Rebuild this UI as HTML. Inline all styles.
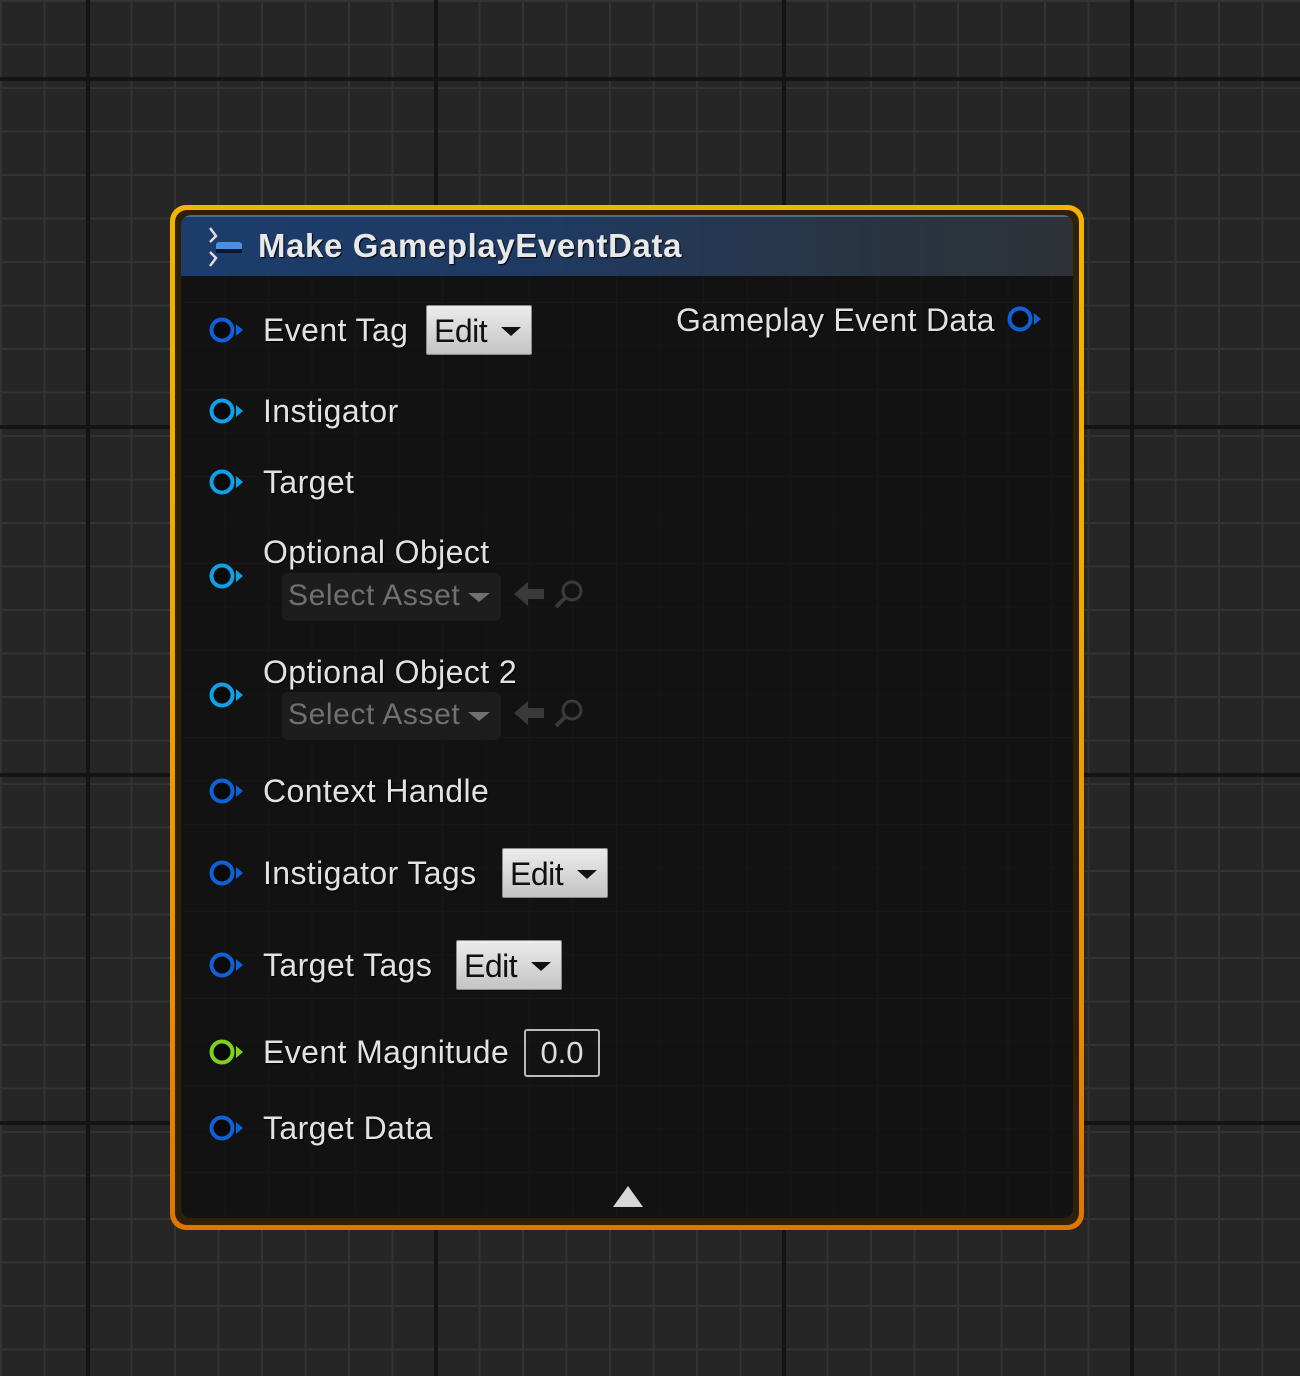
<!DOCTYPE html>
<html><head><meta charset="utf-8"><style>
html,body{margin:0;padding:0}
body{width:1300px;height:1376px;overflow:hidden;position:relative;background-color:#262626;
background-image:
repeating-linear-gradient(to right, transparent 0, transparent 86px, #141414 86px, #141414 90px, transparent 90px, transparent 348px),
repeating-linear-gradient(to bottom, transparent 0, transparent 77px, #141414 77px, #141414 81px, transparent 81px, transparent 348px),
repeating-linear-gradient(to right, #333 0, #333 2px, transparent 2px, transparent 43.5px),
repeating-linear-gradient(to bottom, #333 0, #333 2px, transparent 2px, transparent 43.5px);
font-family:"Liberation Sans",sans-serif;}
.node{position:absolute;left:170px;top:205px;width:914px;height:1025px;border-radius:16px;
background:linear-gradient(#f3b400,#f0a800 40%,#e88a00 80%,#e07400);}
.inner{position:absolute;left:5px;top:5px;right:5px;bottom:5px;border-radius:12px;background:#2e2108;}
.body{position:absolute;left:11px;top:10px;right:11px;bottom:12px;border-radius:10px;background-color:#111211;
background-image:repeating-linear-gradient(to right,#161716 0,#161716 1px,transparent 1px,transparent 43.5px),repeating-linear-gradient(to bottom,#161716 0,#161716 1px,transparent 1px,transparent 43.5px);
overflow:hidden}
.hdr{position:absolute;left:0;top:0;right:0;height:59px;background:linear-gradient(to right,#1c3c6c,#1f3a62 40%,#2a3440 80%,#2f3338);border-top:2px solid #4a6a90}
.t{position:absolute;color:#e2e2e2;font-size:32px;line-height:36px;white-space:nowrap;letter-spacing:0.4px;text-shadow:1px 1px 1px #000}
.edit{position:absolute;height:50px;background:linear-gradient(#ececec,#c4c4c4);border:1px solid #8a8a8a;border-radius:2px;color:#111;font-size:32px;line-height:50px;padding-left:7px;box-sizing:border-box;letter-spacing:-0.5px}
.edit:after{content:"";position:absolute;right:10px;top:21px;border-left:10px solid transparent;border-right:10px solid transparent;border-top:9px solid #111}
.sa{position:absolute;width:219px;height:48px;background:#1c1d1c;border-radius:6px;color:#707070;font-size:30px;line-height:46px;padding-left:6px;box-sizing:border-box;letter-spacing:0.6px;white-space:nowrap}
.sa:after{content:"";position:absolute;left:186px;top:20px;border-left:11px solid transparent;border-right:11px solid transparent;border-top:9px solid #707070}
</style></head><body>
<div class="node"><div class="inner"></div><div class="body"><div class="hdr"></div></div></div>

<svg style="position:absolute;left:200px;top:224px" width="48" height="46" viewBox="0 0 48 46">
<path d="M10 4 L16 12 L10 18" stroke="#ddd" stroke-width="2.5" fill="none"/>
<path d="M10 42 L16 34 L10 28" stroke="#ddd" stroke-width="2.5" fill="none"/>
<rect x="16" y="18" width="26" height="10" rx="3" fill="#4a90e0"/>
<rect x="16" y="25" width="26" height="4" fill="#0c1830"/>
</svg>
<div class="t" style="left:258px;top:228px;font-weight:bold;font-size:33px;letter-spacing:0.6px;color:#e8e8e8">Make GameplayEventData</div>

<div class="t" style="left:676px;top:302px;letter-spacing:0.3px">Gameplay Event Data</div>

<div class="t" style="left:263px;top:312px">Event Tag</div>
<div class="edit" style="left:426px;top:305px;width:106px">Edit</div>
<div class="t" style="left:263px;top:393px">Instigator</div>
<div class="t" style="left:263px;top:464px">Target</div>
<div class="t" style="left:263px;top:534px">Optional Object</div>
<div class="sa" style="left:282px;top:573px">Select Asset</div>
<div class="t" style="left:263px;top:654px">Optional Object 2</div>
<div class="sa" style="left:282px;top:692px">Select Asset</div>
<div class="t" style="left:263px;top:773px">Context Handle</div>
<div class="t" style="left:263px;top:855px">Instigator Tags</div>
<div class="edit" style="left:502px;top:848px;width:106px">Edit</div>
<div class="t" style="left:263px;top:947px">Target Tags</div>
<div class="edit" style="left:456px;top:940px;width:106px">Edit</div>
<div class="t" style="left:263px;top:1034px">Event Magnitude</div>
<div style="position:absolute;left:524px;top:1029px;width:76px;height:48px;box-sizing:border-box;border:2px solid #bbb;border-radius:3px;color:#ddd;font-size:31px;line-height:44px;text-align:center">0.0</div>
<div class="t" style="left:263px;top:1110px">Target Data</div>

<svg width="1300" height="1376" style="position:absolute;left:0;top:0" viewBox="0 0 1300 1376">
<defs>
<g id="p"><circle cx="0" cy="0" r="10.5" fill="#0a0a0a" stroke-width="4"/><path d="M14 -6 L21 0 L14 6 Z" stroke="none"/></g>
</defs>
<g fill="#1060d8" stroke="#1060d8"><use href="#p" x="1020" y="319"/><use href="#p" x="222" y="330"/><use href="#p" x="222" y="791"/><use href="#p" x="222" y="873"/><use href="#p" x="222" y="965"/><use href="#p" x="222" y="1128"/></g>
<g fill="#10a0e8" stroke="#10a0e8"><use href="#p" x="222" y="411"/><use href="#p" x="222" y="482"/><use href="#p" x="222" y="576"/><use href="#p" x="222" y="695"/></g>
<g fill="#80d020" stroke="#80d020"><use href="#p" x="222" y="1052"/></g>
<g fill="#3a3a3a" stroke="#3a3a3a">
<path d="M514 594 L528 582 L528 589 L544 589 L544 599 L528 599 L528 606 Z" stroke="none"/>
<circle cx="572" cy="591" r="9" fill="none" stroke-width="3"/><path d="M565 598 L556 607" stroke-width="4"/>
<path d="M514 713 L528 701 L528 708 L544 708 L544 718 L528 718 L528 725 Z" stroke="none"/>
<circle cx="572" cy="710" r="9" fill="none" stroke-width="3"/><path d="M565 717 L556 726" stroke-width="4"/>
</g>
<path d="M613 1207 L628 1186 L643 1207 Z" fill="#d8d8d8"/>
</svg>
</body></html>
